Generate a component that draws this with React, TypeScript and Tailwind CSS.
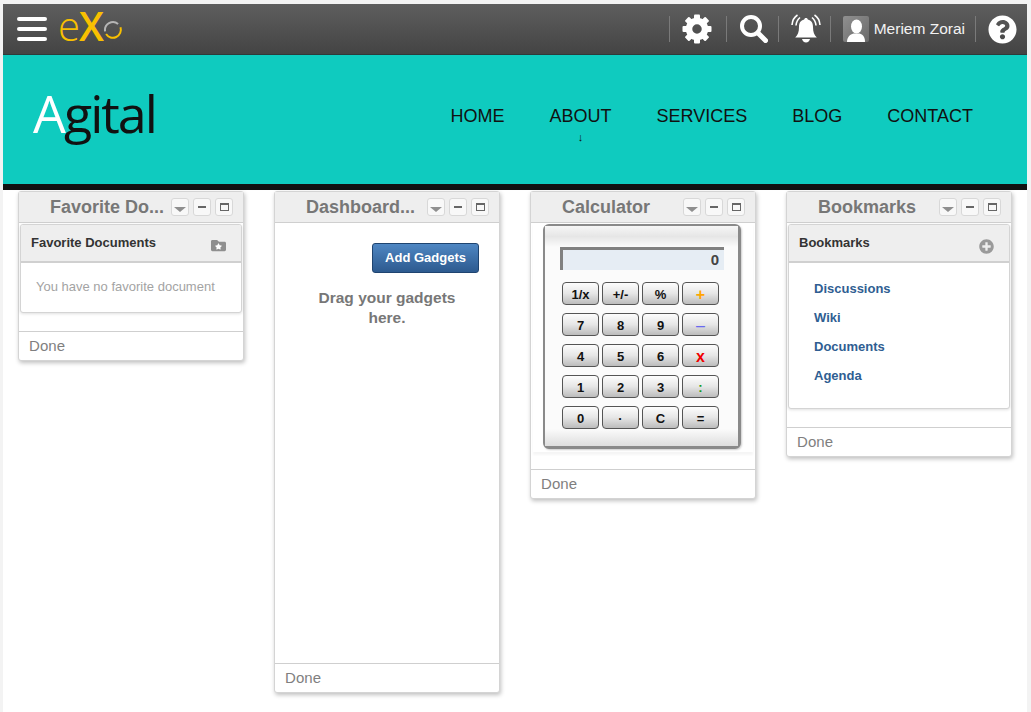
import { FaQuestionCircle, FaFolder, FaStar, FaPlusCircle } from 'react-icons/fa'

const navItems = ['HOME', 'ABOUT', 'SERVICES', 'BLOG', 'CONTACT']

const calcKeys = [
  ['1/x', '+/-', '%', '+'],
  ['7', '8', '9', '–'],
  ['4', '5', '6', 'x'],
  ['1', '2', '3', ':'],
  ['0', '·', 'C', '='],
]

const keyColor = (k: string) => {
  if (k === '+') return 'text-[#ffa500] text-[16px]'
  if (k === '–') return 'text-[#6a6af0] text-[16px] font-normal'
  if (k === 'x') return 'text-[#f00000] text-[16px]'
  if (k === ':') return 'text-[#1a9a1a] text-[13px]'
  return 'text-[#111] text-[13px]'
}

function Separator() {
  return <div className="w-px h-[26px] bg-[#7a7a7a]" />
}

function GearIcon() {
  const teeth = [0, 45, 90, 135, 180, 225, 270, 315]
  return (
    <svg width="30" height="30" viewBox="0 0 30 30">
      {teeth.map(a => (
        <rect key={a} x="12" y="0.5" width="6" height="7" rx="1" fill="#fff" transform={`rotate(${a} 15 15)`} />
      ))}
      <circle cx="15" cy="15" r="8" fill="none" stroke="#fff" strokeWidth="6.5" />
    </svg>
  )
}

function SearchIcon() {
  return (
    <svg width="28" height="28" viewBox="0 0 28 28" fill="none">
      <circle cx="11" cy="11" r="9" stroke="#fff" strokeWidth="4" />
      <path d="M18 18l7.5 7.5" stroke="#fff" strokeWidth="5" strokeLinecap="round" />
    </svg>
  )
}

function BellIcon() {
  return (
    <svg width="30" height="30" viewBox="0 0 30 30" fill="none">
      <path d="M15 4c1 0 1.8.7 1.8 1.6 3.6.8 5.2 3.6 5.2 7.4 0 5 1.2 8 3.8 10.5H4.2C6.8 21 8 18 8 13c0-3.8 1.6-6.6 5.2-7.4C13.2 4.700 14 4 15 4z" fill="#fff" />
      <path d="M11 25h8c-.3 1.800-2 3.500-4 3.500s-3.700-1.700-4-3.500z" fill="#fff" />
      <path d="M5 11.500C5.300 8 6.800 5.300 9 3.500M1 11C1.400 6.500 3.300 3 6.500 1" stroke="#fff" strokeWidth="1.600" />
      <path d="M25 11.500C24.700 8 23.200 5.300 21 3.500M29 11C28.600 6.500 26.700 3 23.500 1" stroke="#fff" strokeWidth="1.600" />
    </svg>
  )
}

function Avatar() {
  return (
    <div className="w-[26px] h-[26px] rounded-[2px] bg-gradient-to-br from-[#909090] to-[#6a6a6a] overflow-hidden">
      <svg width="26" height="26" viewBox="0 0 26 26">
        <ellipse cx="13.5" cy="10.5" rx="5.5" ry="7" fill="#fff" />
        <path d="M4 26c0-5 3-7.500 6.500-8.500h6c3.500 1 5.500 3.500 5.500 8.500z" fill="#fff" />
      </svg>
    </div>
  )
}

function WindowButton({ kind }: { kind: 'down' | 'min' | 'max' }) {
  return (
    <button className="w-[18px] h-[18px] rounded-[3px] border border-[#d8d8d8] bg-[#f8f8f8] flex items-center justify-center">
      {kind === 'down' && <div className="mt-[5px] w-0 h-0 border-l-[6px] border-r-[6px] border-t-[5px] border-l-transparent border-r-transparent border-t-[#8f8f8f]" />}
      {kind === 'min' && <div className="w-[8px] h-[2px] bg-[#666]" />}
      {kind === 'max' && <div className="w-[9px] h-[8px] border border-[#666] border-t-2" />}
    </button>
  )
}

function Gadget({ title, height, children }: { title: string; height: number; children: React.ReactNode }) {
  return (
    <div className="w-[226px] flex flex-col rounded-[3px] border border-[#d4d4d4] bg-white shadow-[1px_2px_4px_rgba(0,0,0,0.25)]" style={{ height }}>
      <div className="h-[31px] shrink-0 flex items-center justify-between pl-[31px] pr-[10px] bg-[#eeeeee] border-b border-[#cfcfcf]">
        <span className="text-[18px] font-bold text-[#777] whitespace-nowrap">{title}</span>
        <div className="flex gap-1 shrink-0">
          <WindowButton kind="down" />
          <WindowButton kind="min" />
          <WindowButton kind="max" />
        </div>
      </div>
      <div className="flex-1 min-h-0">{children}</div>
      <div className="h-[29px] shrink-0 border-t border-[#cfcfcf] pl-[10px] text-[15px] leading-[27px] text-[#7f7f7f] tracking-[0.1px]">Done</div>
    </div>
  )
}

function InnerCard({ title, icon, height, children }: { title: string; icon: React.ReactNode; height: number; children: React.ReactNode }) {
  return (
    <div className="mx-[1px] mt-[1px] rounded-[3px] border border-[#d4d4d4] bg-white shadow-[0_1px_3px_rgba(0,0,0,0.12)] overflow-hidden" style={{ height }}>
      <div className="h-[38px] flex items-center justify-between pl-[10px] pr-[15px] bg-[#eeeeee] border-b-2 border-[#d0d0d0]">
        <span className="text-[13px] font-bold text-[#333] -mt-[1px]">{title}</span>
        {icon}
      </div>
      {children}
    </div>
  )
}

function Calculator() {
  return (
    <div className="pt-[1px] shadow-[0_3px_2px_rgba(0,0,0,0.04)] mx-[2px] pb-[3px]">
      <div className="ml-[10px] w-[198px] h-[225px] rounded-[6px] border-2 border-[#8a8a8a] border-r-[3px] border-b-[3px] bg-[#fbfbfb] flex flex-col shadow-[1px_1px_2px_rgba(0,0,0,0.2)]">
        <div className="h-[21px] bg-gradient-to-b from-[#f6f6f6] via-[#e6e6e6] to-[#fbfbfb]" />
        <div className="ml-[15px] w-[164px] h-[23px] bg-[#e6edf4] border-t-[3px] border-l-[3px] border-[#808080] text-right pr-[5px] text-[15px] leading-[19px] font-bold text-[#444]">0</div>
        <div className="mt-[12px] ml-[17px] flex flex-col gap-2">
          {calcKeys.map((row, i) => (
            <div key={i} className="flex gap-[3px]">
              {row.map(k => (
                <button key={k} className={`w-[37px] h-[23px] pt-[1px] rounded-[4px] border border-[#555] bg-gradient-to-b from-[#fdfdfd] via-[#e6e6e6] to-[#bcbcbc] leading-[19px] font-bold ${keyColor(k)}`}>{k}</button>
              ))}
            </div>
          ))}
        </div>
        <div className="mt-auto h-[17px] bg-gradient-to-b from-[#fbfbfb] to-[#dedede]" />
      </div>
    </div>
  )
}

const bookmarks = ['Discussions', 'Wiki', 'Documents', 'Agenda']

export default function App() {
  return (
    <div className="w-[1031px] h-[712px] overflow-hidden bg-[#f3f3f3] pt-[4px] pl-[3px] pr-[4px] font-['Liberation_Sans',sans-serif]">
      <div className="h-full bg-white">
        <div className="h-[51px] flex items-center bg-gradient-to-b from-[#5e5e5e] to-[#444] border-b border-[#2e3a3a] pl-[14px]">
          <div className="flex flex-col gap-[6px] w-[30px]">
            <div className="h-[4px] rounded-full bg-white" />
            <div className="h-[4px] rounded-full bg-white" />
            <div className="h-[4px] rounded-full bg-white" />
          </div>
          <div className="ml-[11px] flex items-center font-['Open_Sans',sans-serif] text-[#f9c000] text-[36px] leading-[48px] -mt-[7px] h-[48px]">
            <span className="font-light text-[40px]">e</span>
            <span className="font-semibold text-[40px] -ml-[1px]">X</span>
            <svg width="20" height="20" viewBox="0 0 20 20" fill="none" className="-ml-[1px] mt-[9px]">
              <path d="M17.5 7.3A8 8 0 0 1 3.1 14" stroke="#f9c000" strokeWidth="2" />
              <path d="M2.1 11.4A8 8 0 0 1 15.1 3.9" stroke="#b5b5b5" strokeWidth="2" />
            </svg>
          </div>
          <div className="flex-1" />
          <div className="flex items-center text-white">
            <Separator />
            <div className="ml-[12px] mr-[14px]"><GearIcon /></div>
            <Separator />
            <div className="ml-[13px] mr-[10px]"><SearchIcon /></div>
            <Separator />
            <div className="ml-[12px] mr-[9px]"><BellIcon /></div>
            <Separator />
            <div className="ml-[12px]"><Avatar /></div>
            <span className="ml-[5px] mr-[10px] text-[15.5px] text-[#f2f2f2]">Meriem Zorai</span>
            <Separator />
            <FaQuestionCircle className="ml-[12px] mr-[10px] w-[29px] h-[29px]" />
          </div>
        </div>

        <div className="h-[129px] flex bg-[#0fcbbf] pl-[30px]">
          <div className="mt-[23px] h-[70px] font-['Open_Sans',sans-serif] font-normal text-[52px] leading-[70px] tracking-[-2px] text-[#111]">
            <span className="text-white">A</span>gital
          </div>
          <nav className="ml-auto mr-[54px] mt-[51px] flex gap-[45px] text-[18px] leading-[21px] text-[#111]">
            {navItems.map(item => (
              <div key={item} className="relative">
                {item}
                {item === 'ABOUT' && <span className="absolute left-1/2 top-[26px] -translate-x-1/2 text-[11px] leading-[11px]">↓</span>}
              </div>
            ))}
          </nav>
        </div>
        <div className="h-[6px] bg-[#111]" />

        <div className="flex items-start gap-[30px] pl-[15px] pt-[1px]">
          <Gadget title="Favorite Do..." height={170}>
            <InnerCard
              title="Favorite Documents"
              height={89}
              icon={
                <div className="relative mt-[4px]">
                  <FaFolder className="w-[15px] h-[15px] text-[#8f8f8f]" />
                  <FaStar className="absolute left-[4px] top-[5px] w-[7px] h-[7px] text-white" />
                </div>
              }
            >
              <p className="pl-[15px] pt-[15px] text-[13px] leading-[17px] text-[#a3a3a3]">You have no favorite document</p>
            </InnerCard>
          </Gadget>

          <Gadget title="Dashboard..." height={502}>
            <div className="flex flex-col">
              <button className="ml-[97px] mt-[20px] w-[107px] h-[30px] rounded-[3px] border border-[#1f4470] bg-gradient-to-b from-[#4f87c3] to-[#2d5a8f] text-[13px] font-bold text-white">Add Gadgets</button>
              <p className="mx-auto mt-[15px] w-[170px] text-center text-[15.5px] leading-[20px] font-bold text-[#777]">Drag your gadgets here.</p>
            </div>
          </Gadget>

          <Gadget title="Calculator" height={308}>
            <Calculator />
          </Gadget>

          <Gadget title="Bookmarks" height={266}>
            <InnerCard
              title="Bookmarks"
              height={185}
              icon={<FaPlusCircle className="mt-[6px] w-[15px] h-[15px] text-[#9a9a9a]" />}
            >
              <div className="pl-[25px] pt-[17px] flex flex-col gap-[12px]">
                {bookmarks.map(b => (
                  <a key={b} className="text-[13px] leading-[17px] font-bold text-[#2f5e92]">{b}</a>
                ))}
              </div>
            </InnerCard>
          </Gadget>
        </div>
      </div>
    </div>
  )
}
